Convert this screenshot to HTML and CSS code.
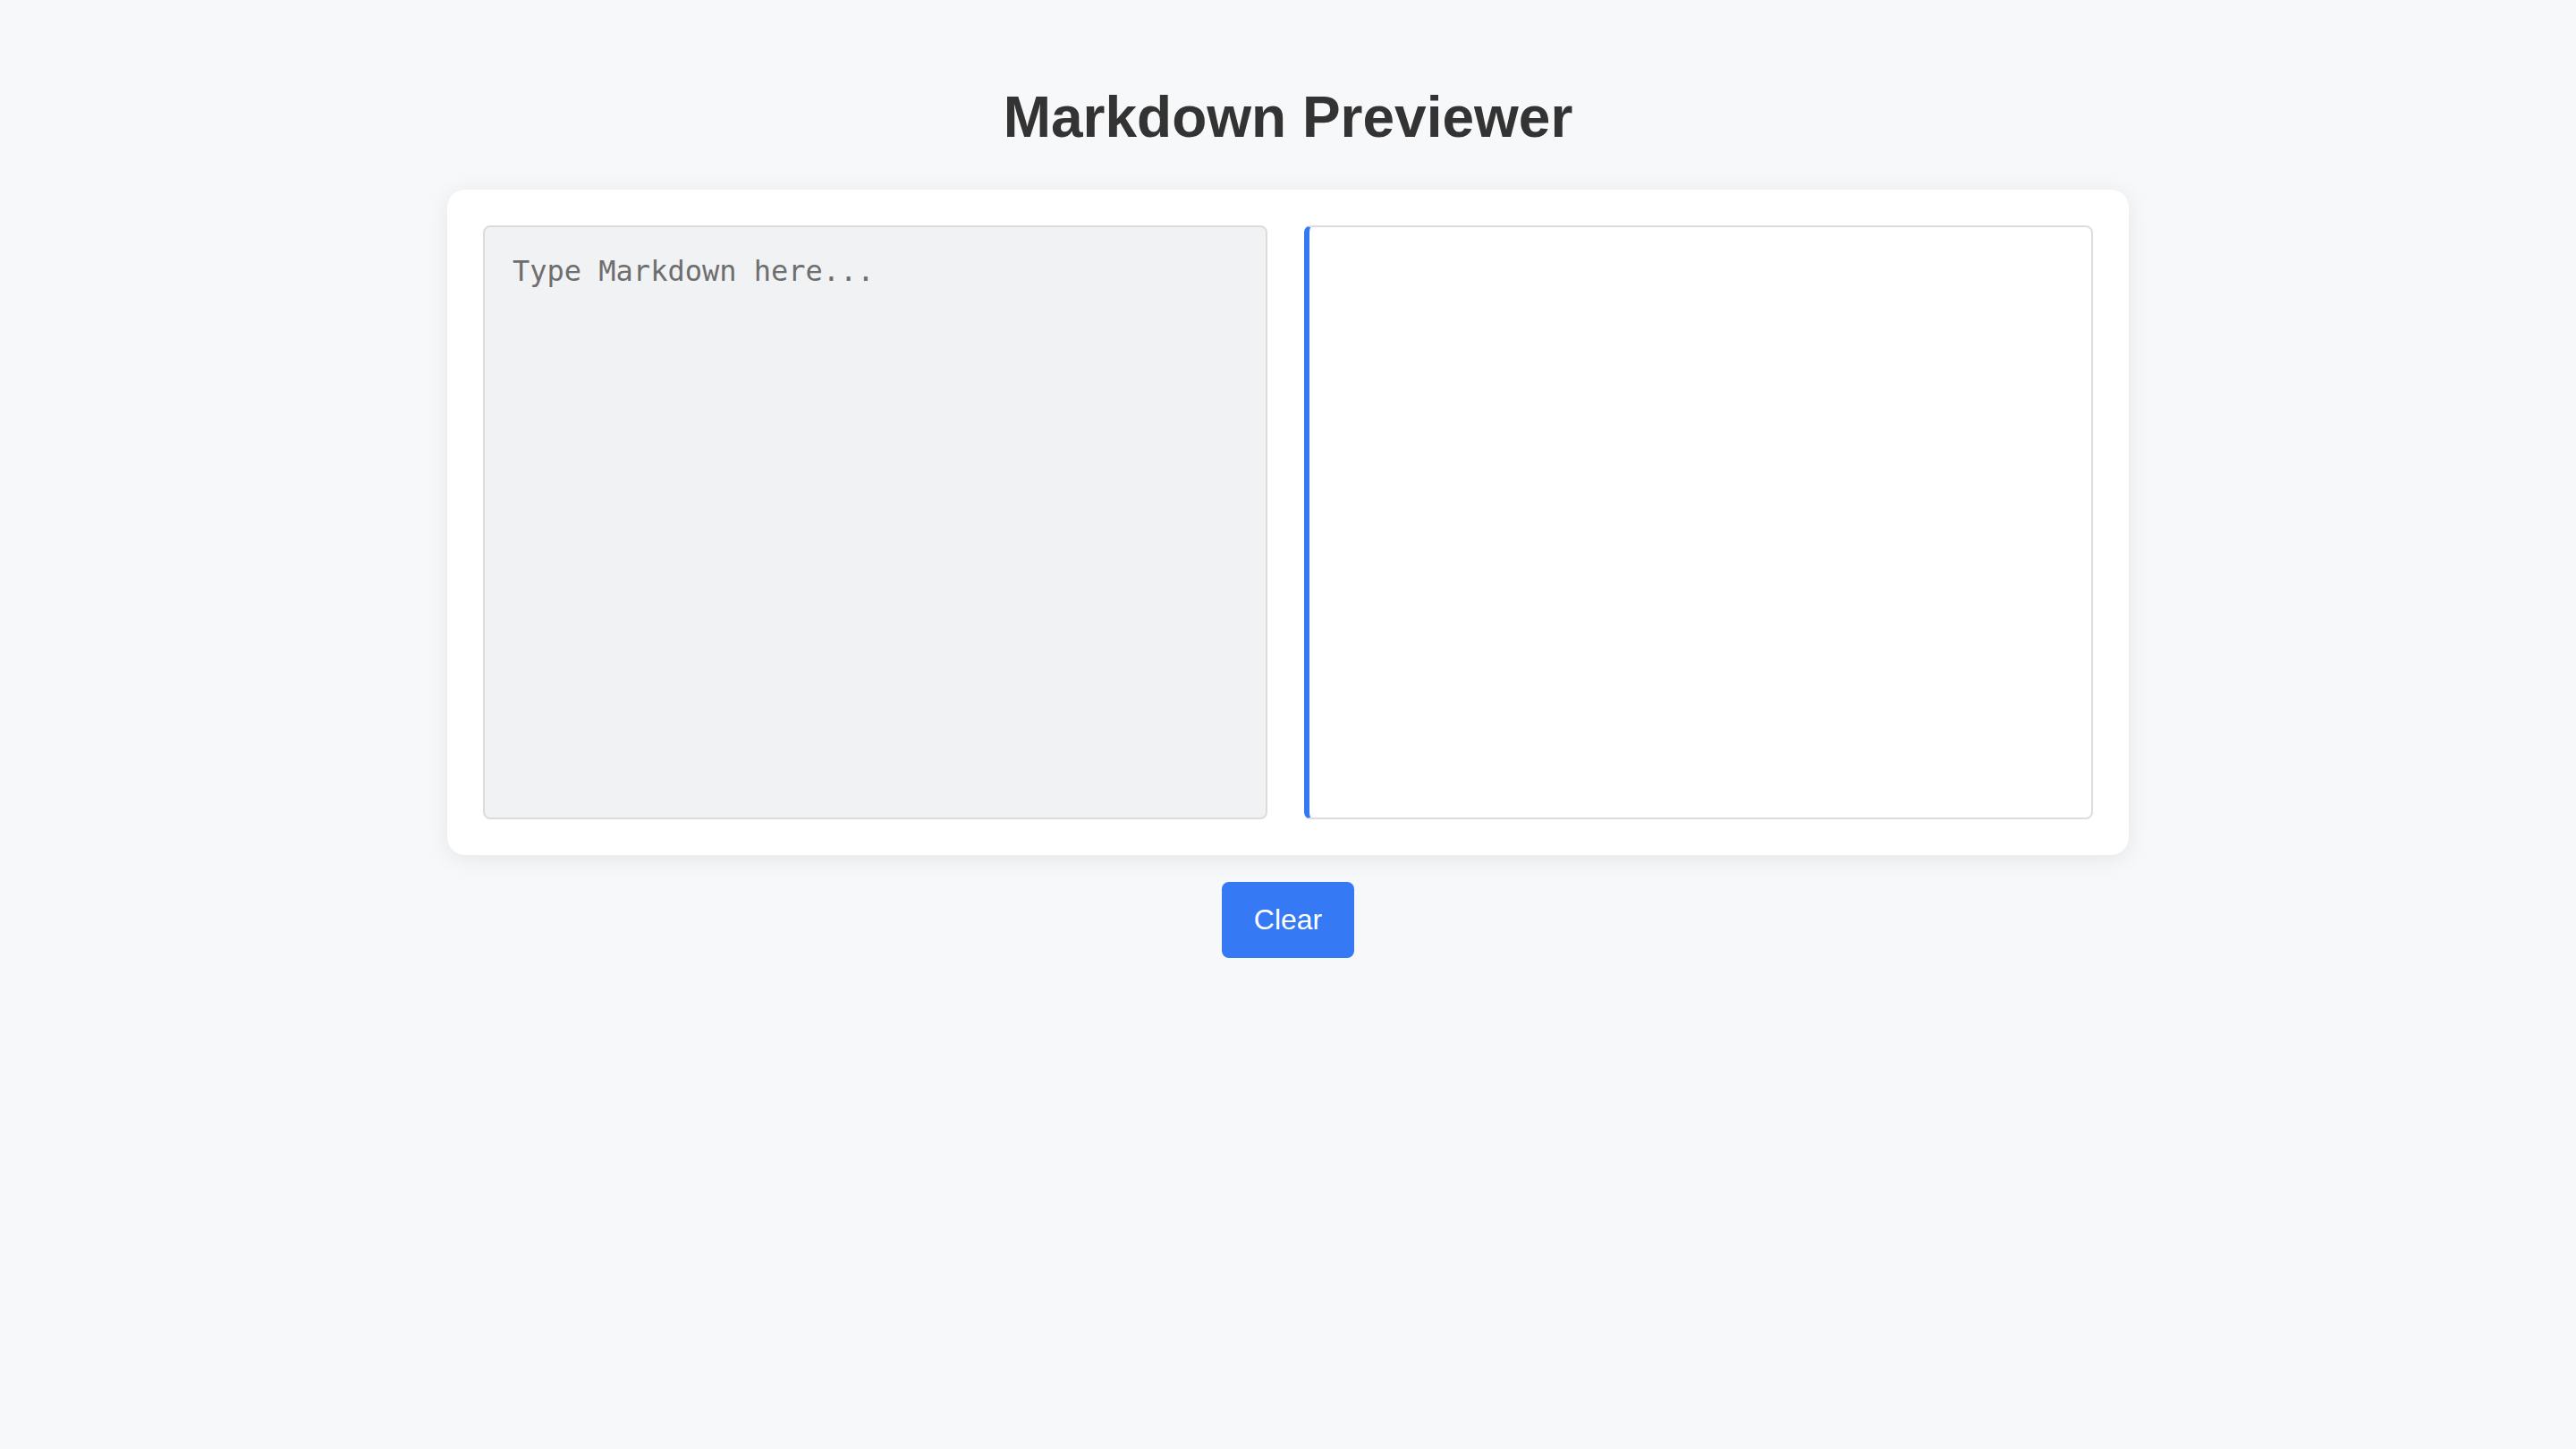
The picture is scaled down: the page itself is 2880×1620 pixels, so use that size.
FILE: index.html
```html
<!DOCTYPE html>
<html lang="en">
<head>
<meta charset="utf-8">
<title>Markdown Previewer</title>
<link rel="stylesheet" href="styles.css">
</head>
<body>
<main class="page">
  <h1 class="title">Markdown Previewer</h1>
  <section class="card">
    <textarea class="editor" placeholder="Type Markdown here..."></textarea>
    <div class="preview"></div>
  </section>
  <button class="clear-btn" type="button">Clear</button>
</main>
</body>
</html>
```
FILE: styles.css
```css
* { box-sizing: border-box; }
html, body {
  margin: 0;
  padding: 0;
  background: #f7f8fa;
  font-family: "Liberation Sans", Arial, sans-serif;
}
.page {
  display: flex;
  flex-direction: column;
  align-items: center;
  padding-top: 94px;
}
.title {
  margin: 0 0 44px;
  font-size: 64px;
  line-height: 74px;
  font-weight: 700;
  color: #333333;
}
.card {
  width: 1880px;
  padding: 40px;
  background: #ffffff;
  border-radius: 20px;
  box-shadow: 0 4px 24px rgba(0, 0, 0, 0.08);
  display: grid;
  grid-template-columns: 877px 882px;
  column-gap: 41px;
}
.editor {
  height: 664px;
  margin: 0;
  padding: 30px 31px;
  border: 2px solid #dcdcdc;
  border-radius: 8px;
  background: #f1f2f4;
  font-family: "DejaVu Sans Mono", Menlo, monospace;
  font-size: 32px;
  color: #333;
  resize: none;
  outline: none;
}
.editor::placeholder {
  color: #6e6e6e;
}
.preview {
  height: 664px;
  border: 2px solid #dcdcdc;
  border-left: 6px solid #3478f6;
  border-radius: 8px;
  background: #ffffff;
}
.clear-btn {
  margin-top: 30px;
  width: 148px;
  height: 85px;
  padding: 0;
  border: none;
  border-radius: 8px;
  background: #3679f5;
  color: #ffffff;
  font-family: "Liberation Sans", Arial, sans-serif;
  font-size: 32px;
  cursor: pointer;
}
```
